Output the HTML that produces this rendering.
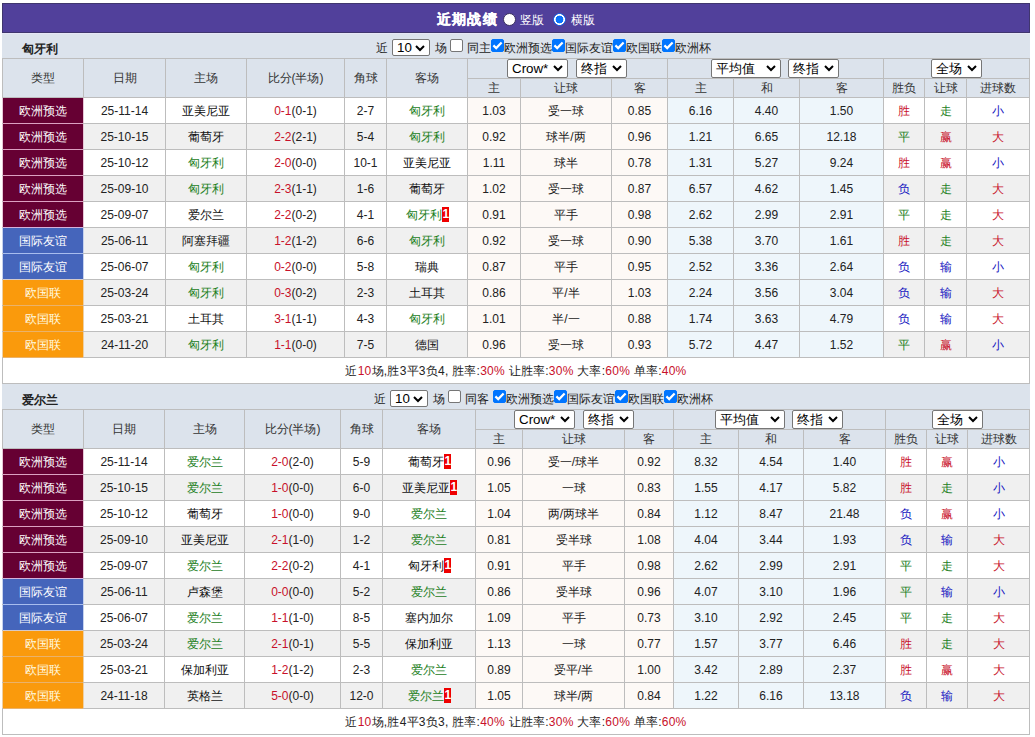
<!DOCTYPE html>
<html><head><meta charset="utf-8"><title>近期战绩</title>
<style>
html,body{margin:0;padding:0;background:#fff;}
body{width:1035px;height:737px;position:relative;overflow:hidden;font-family:"Liberation Sans", sans-serif;font-size:12px;color:#222;}
.a{position:absolute;text-align:center;white-space:nowrap;overflow:hidden;}
.t{position:absolute;white-space:nowrap;}
.sel{position:absolute;background:#fff;border:1px solid #767676;border-radius:2px;font-size:13.33px;color:#000;text-align:left;}
.sel .st{position:absolute;left:4px;top:0;}
.sel .chev{position:absolute;right:4px;top:5px;}
.cb{position:absolute;width:11px;height:11px;border:1px solid #767676;border-radius:2px;background:#fff;}
.cb.on{background:#0075ff;border-color:#0075ff;}
.cb svg{position:absolute;left:-1px;top:-1px;}
.radio{position:absolute;width:13px;height:13px;border-radius:50%;background:#fff;box-sizing:border-box;border:1px solid #3a3060;}
.radio.on{background:radial-gradient(circle,#0a74fb 0,#0a74fb 3.6px,#fff 4.2px,#fff 5.1px,#1f66e0 5.7px,#1f66e0 6.2px,rgba(31,102,224,0.3) 6.5px);border:none;}
.card{display:inline-block;background:#e00;color:#fff;font-weight:bold;width:7px;text-align:center;text-indent:1px;line-height:15px;height:15px;vertical-align:middle;margin-top:-3px}
</style></head><body>
<div class="a" style="left:2px;top:3px;width:1028px;height:30px;background:#51409b;box-sizing:border-box;border:1px solid #40366e"></div>
<div class="t" style="left:437px;top:10px;color:#fff;font-weight:bold;font-size:14px;letter-spacing:1.2px;line-height:18px;-webkit-text-stroke:0.35px #fff">近期战绩</div>
<div class="radio" style="left:503px;top:13px"></div>
<div class="t" style="left:520px;top:12px;color:#fff;line-height:17px">竖版</div>
<div class="radio on" style="left:553px;top:13px"></div>
<div class="t" style="left:571px;top:12px;color:#fff;line-height:17px">横版</div>
<div class="a" style="left:2px;top:33px;width:1028px;height:25px;background:#dce3ec;"></div>
<div class="t" style="left:22px;top:41px;font-weight:bold;color:#222;line-height:17px">匈牙利</div>
<div class="t" style="left:376px;top:40px;line-height:17px">近</div>
<div class="sel" style="left:392px;top:39px;width:36px;height:15px;line-height:15px"><span class="st">10</span><svg class="chev" width="10" height="7" viewBox="0 0 10 7"><path d="M1 1 L5 5 L9 1" fill="none" stroke="#000" stroke-width="2"/></svg></div>
<div class="t" style="left:435px;top:40px;line-height:17px">场</div>
<div class="cb" style="left:450px;top:39px"></div>
<div class="t" style="left:467px;top:40px;line-height:17px">同主</div>
<div class="cb on" style="left:491px;top:39px"><svg width="13" height="13" viewBox="0 0 13 13"><path d="M2.4 6.4 L5.2 9.1 L10.6 3.4" fill="none" stroke="#fff" stroke-width="2.2"/></svg></div>
<div class="t" style="left:504px;top:40px;line-height:17px">欧洲预选</div>
<div class="cb on" style="left:552px;top:39px"><svg width="13" height="13" viewBox="0 0 13 13"><path d="M2.4 6.4 L5.2 9.1 L10.6 3.4" fill="none" stroke="#fff" stroke-width="2.2"/></svg></div>
<div class="t" style="left:565px;top:40px;line-height:17px">国际友谊</div>
<div class="cb on" style="left:613px;top:39px"><svg width="13" height="13" viewBox="0 0 13 13"><path d="M2.4 6.4 L5.2 9.1 L10.6 3.4" fill="none" stroke="#fff" stroke-width="2.2"/></svg></div>
<div class="t" style="left:626px;top:40px;line-height:17px">欧国联</div>
<div class="cb on" style="left:662px;top:39px"><svg width="13" height="13" viewBox="0 0 13 13"><path d="M2.4 6.4 L5.2 9.1 L10.6 3.4" fill="none" stroke="#fff" stroke-width="2.2"/></svg></div>
<div class="t" style="left:675px;top:40px;line-height:17px">欧洲杯</div>
<div class="a" style="left:2px;top:58px;width:1028px;height:326px;background:#bdbdbd;"></div>
<div class="a" style="left:3px;top:59px;width:80px;height:38px;background:#dce3ec;line-height:38px;color:#333">类型</div>
<div class="a" style="left:84px;top:59px;width:81px;height:38px;background:#dce3ec;line-height:38px;color:#333">日期</div>
<div class="a" style="left:166px;top:59px;width:80px;height:38px;background:#dce3ec;line-height:38px;color:#333">主场</div>
<div class="a" style="left:247px;top:59px;width:97px;height:38px;background:#dce3ec;line-height:38px;color:#333">比分(半场)</div>
<div class="a" style="left:345px;top:59px;width:41px;height:38px;background:#dce3ec;line-height:38px;color:#333">角球</div>
<div class="a" style="left:387px;top:59px;width:80px;height:38px;background:#dce3ec;line-height:38px;color:#333">客场</div>
<div class="a" style="left:468px;top:59px;width:199px;height:19px;background:#dce3ec;line-height:19px;"></div>
<div class="a" style="left:668px;top:59px;width:215px;height:19px;background:#dce3ec;line-height:19px;"></div>
<div class="a" style="left:884px;top:59px;width:145px;height:19px;background:#dce3ec;line-height:19px;"></div>
<div class="a" style="left:468px;top:79px;width:52px;height:18px;background:#dce3ec;line-height:18px;color:#333">主</div>
<div class="a" style="left:521px;top:79px;width:90px;height:18px;background:#dce3ec;line-height:18px;color:#333">让球</div>
<div class="a" style="left:612px;top:79px;width:55px;height:18px;background:#dce3ec;line-height:18px;color:#333">客</div>
<div class="a" style="left:668px;top:79px;width:65px;height:18px;background:#dce3ec;line-height:18px;color:#333">主</div>
<div class="a" style="left:734px;top:79px;width:65px;height:18px;background:#dce3ec;line-height:18px;color:#333">和</div>
<div class="a" style="left:800px;top:79px;width:83px;height:18px;background:#dce3ec;line-height:18px;color:#333">客</div>
<div class="a" style="left:884px;top:79px;width:40px;height:18px;background:#dce3ec;line-height:18px;color:#333">胜负</div>
<div class="a" style="left:925px;top:79px;width:41px;height:18px;background:#dce3ec;line-height:18px;color:#333">让球</div>
<div class="a" style="left:967px;top:79px;width:62px;height:18px;background:#dce3ec;line-height:18px;color:#333">进球数</div>
<div class="sel" style="left:507px;top:59px;width:59px;height:17px;line-height:17px"><span class="st">Crow*</span><svg class="chev" width="10" height="7" viewBox="0 0 10 7"><path d="M1 1 L5 5 L9 1" fill="none" stroke="#000" stroke-width="2"/></svg></div>
<div class="sel" style="left:576px;top:59px;width:49px;height:17px;line-height:17px"><span class="st">终指</span><svg class="chev" width="10" height="7" viewBox="0 0 10 7"><path d="M1 1 L5 5 L9 1" fill="none" stroke="#000" stroke-width="2"/></svg></div>
<div class="sel" style="left:711px;top:59px;width:68px;height:17px;line-height:17px"><span class="st">平均值</span><svg class="chev" width="10" height="7" viewBox="0 0 10 7"><path d="M1 1 L5 5 L9 1" fill="none" stroke="#000" stroke-width="2"/></svg></div>
<div class="sel" style="left:788px;top:59px;width:49px;height:17px;line-height:17px"><span class="st">终指</span><svg class="chev" width="10" height="7" viewBox="0 0 10 7"><path d="M1 1 L5 5 L9 1" fill="none" stroke="#000" stroke-width="2"/></svg></div>
<div class="sel" style="left:931px;top:59px;width:49px;height:17px;line-height:17px"><span class="st">全场</span><svg class="chev" width="10" height="7" viewBox="0 0 10 7"><path d="M1 1 L5 5 L9 1" fill="none" stroke="#000" stroke-width="2"/></svg></div>
<div class="a" style="left:3px;top:98px;width:80px;height:26px;background:#660033;line-height:27px;color:#fff">欧洲预选</div>
<div class="a" style="left:84px;top:98px;width:81px;height:25px;background:#fff;line-height:27px;">25-11-14</div>
<div class="a" style="left:166px;top:98px;width:80px;height:25px;background:#fff;line-height:27px;color:#111">亚美尼亚</div>
<div class="a" style="left:247px;top:98px;width:97px;height:25px;background:#fff;line-height:27px;"><span style="color:#c8102a">0-1</span>(0-1)</div>
<div class="a" style="left:345px;top:98px;width:41px;height:25px;background:#fff;line-height:27px;">2-7</div>
<div class="a" style="left:387px;top:98px;width:80px;height:25px;background:#fff;line-height:27px;color:#1c801c">匈牙利</div>
<div class="a" style="left:468px;top:98px;width:52px;height:25px;background:#fdf9f6;line-height:27px;">1.03</div>
<div class="a" style="left:521px;top:98px;width:90px;height:25px;background:#fdf9f6;line-height:27px;">受一球</div>
<div class="a" style="left:612px;top:98px;width:55px;height:25px;background:#fdf9f6;line-height:27px;">0.85</div>
<div class="a" style="left:668px;top:98px;width:65px;height:25px;background:#eef6fb;line-height:27px;">6.16</div>
<div class="a" style="left:734px;top:98px;width:65px;height:25px;background:#eef6fb;line-height:27px;">4.40</div>
<div class="a" style="left:800px;top:98px;width:83px;height:25px;background:#eef6fb;line-height:27px;">1.50</div>
<div class="a" style="left:884px;top:98px;width:40px;height:25px;background:#fff;line-height:27px;color:#c8102a">胜</div>
<div class="a" style="left:925px;top:98px;width:41px;height:25px;background:#fff;line-height:27px;color:#1c801c">走</div>
<div class="a" style="left:967px;top:98px;width:62px;height:25px;background:#fff;line-height:27px;color:#1414c0">小</div>
<div class="a" style="left:3px;top:124px;width:80px;height:26px;background:#660033;line-height:27px;color:#fff">欧洲预选</div>
<div class="a" style="left:84px;top:124px;width:81px;height:25px;background:#f0f0f0;line-height:27px;">25-10-15</div>
<div class="a" style="left:166px;top:124px;width:80px;height:25px;background:#f0f0f0;line-height:27px;color:#111">葡萄牙</div>
<div class="a" style="left:247px;top:124px;width:97px;height:25px;background:#f0f0f0;line-height:27px;"><span style="color:#c8102a">2-2</span>(2-1)</div>
<div class="a" style="left:345px;top:124px;width:41px;height:25px;background:#f0f0f0;line-height:27px;">5-4</div>
<div class="a" style="left:387px;top:124px;width:80px;height:25px;background:#f0f0f0;line-height:27px;color:#1c801c">匈牙利</div>
<div class="a" style="left:468px;top:124px;width:52px;height:25px;background:#fdf9f6;line-height:27px;">0.92</div>
<div class="a" style="left:521px;top:124px;width:90px;height:25px;background:#fdf9f6;line-height:27px;">球半/两</div>
<div class="a" style="left:612px;top:124px;width:55px;height:25px;background:#fdf9f6;line-height:27px;">0.96</div>
<div class="a" style="left:668px;top:124px;width:65px;height:25px;background:#eef6fb;line-height:27px;">1.21</div>
<div class="a" style="left:734px;top:124px;width:65px;height:25px;background:#eef6fb;line-height:27px;">6.65</div>
<div class="a" style="left:800px;top:124px;width:83px;height:25px;background:#eef6fb;line-height:27px;">12.18</div>
<div class="a" style="left:884px;top:124px;width:40px;height:25px;background:#f0f0f0;line-height:27px;color:#1c801c">平</div>
<div class="a" style="left:925px;top:124px;width:41px;height:25px;background:#f0f0f0;line-height:27px;color:#c8102a">赢</div>
<div class="a" style="left:967px;top:124px;width:62px;height:25px;background:#f0f0f0;line-height:27px;color:#c8102a">大</div>
<div class="a" style="left:3px;top:150px;width:80px;height:26px;background:#660033;line-height:27px;color:#fff">欧洲预选</div>
<div class="a" style="left:84px;top:150px;width:81px;height:25px;background:#fff;line-height:27px;">25-10-12</div>
<div class="a" style="left:166px;top:150px;width:80px;height:25px;background:#fff;line-height:27px;color:#1c801c">匈牙利</div>
<div class="a" style="left:247px;top:150px;width:97px;height:25px;background:#fff;line-height:27px;"><span style="color:#c8102a">2-0</span>(0-0)</div>
<div class="a" style="left:345px;top:150px;width:41px;height:25px;background:#fff;line-height:27px;">10-1</div>
<div class="a" style="left:387px;top:150px;width:80px;height:25px;background:#fff;line-height:27px;color:#111">亚美尼亚</div>
<div class="a" style="left:468px;top:150px;width:52px;height:25px;background:#fdf9f6;line-height:27px;">1.11</div>
<div class="a" style="left:521px;top:150px;width:90px;height:25px;background:#fdf9f6;line-height:27px;">球半</div>
<div class="a" style="left:612px;top:150px;width:55px;height:25px;background:#fdf9f6;line-height:27px;">0.78</div>
<div class="a" style="left:668px;top:150px;width:65px;height:25px;background:#eef6fb;line-height:27px;">1.31</div>
<div class="a" style="left:734px;top:150px;width:65px;height:25px;background:#eef6fb;line-height:27px;">5.27</div>
<div class="a" style="left:800px;top:150px;width:83px;height:25px;background:#eef6fb;line-height:27px;">9.24</div>
<div class="a" style="left:884px;top:150px;width:40px;height:25px;background:#fff;line-height:27px;color:#c8102a">胜</div>
<div class="a" style="left:925px;top:150px;width:41px;height:25px;background:#fff;line-height:27px;color:#c8102a">赢</div>
<div class="a" style="left:967px;top:150px;width:62px;height:25px;background:#fff;line-height:27px;color:#1414c0">小</div>
<div class="a" style="left:3px;top:176px;width:80px;height:26px;background:#660033;line-height:27px;color:#fff">欧洲预选</div>
<div class="a" style="left:84px;top:176px;width:81px;height:25px;background:#f0f0f0;line-height:27px;">25-09-10</div>
<div class="a" style="left:166px;top:176px;width:80px;height:25px;background:#f0f0f0;line-height:27px;color:#1c801c">匈牙利</div>
<div class="a" style="left:247px;top:176px;width:97px;height:25px;background:#f0f0f0;line-height:27px;"><span style="color:#c8102a">2-3</span>(1-1)</div>
<div class="a" style="left:345px;top:176px;width:41px;height:25px;background:#f0f0f0;line-height:27px;">1-6</div>
<div class="a" style="left:387px;top:176px;width:80px;height:25px;background:#f0f0f0;line-height:27px;color:#111">葡萄牙</div>
<div class="a" style="left:468px;top:176px;width:52px;height:25px;background:#fdf9f6;line-height:27px;">1.02</div>
<div class="a" style="left:521px;top:176px;width:90px;height:25px;background:#fdf9f6;line-height:27px;">受一球</div>
<div class="a" style="left:612px;top:176px;width:55px;height:25px;background:#fdf9f6;line-height:27px;">0.87</div>
<div class="a" style="left:668px;top:176px;width:65px;height:25px;background:#eef6fb;line-height:27px;">6.57</div>
<div class="a" style="left:734px;top:176px;width:65px;height:25px;background:#eef6fb;line-height:27px;">4.62</div>
<div class="a" style="left:800px;top:176px;width:83px;height:25px;background:#eef6fb;line-height:27px;">1.45</div>
<div class="a" style="left:884px;top:176px;width:40px;height:25px;background:#f0f0f0;line-height:27px;color:#1414c0">负</div>
<div class="a" style="left:925px;top:176px;width:41px;height:25px;background:#f0f0f0;line-height:27px;color:#1c801c">走</div>
<div class="a" style="left:967px;top:176px;width:62px;height:25px;background:#f0f0f0;line-height:27px;color:#c8102a">大</div>
<div class="a" style="left:3px;top:202px;width:80px;height:26px;background:#660033;line-height:27px;color:#fff">欧洲预选</div>
<div class="a" style="left:84px;top:202px;width:81px;height:25px;background:#fff;line-height:27px;">25-09-07</div>
<div class="a" style="left:166px;top:202px;width:80px;height:25px;background:#fff;line-height:27px;color:#111">爱尔兰</div>
<div class="a" style="left:247px;top:202px;width:97px;height:25px;background:#fff;line-height:27px;"><span style="color:#c8102a">2-2</span>(0-2)</div>
<div class="a" style="left:345px;top:202px;width:41px;height:25px;background:#fff;line-height:27px;">4-1</div>
<div class="a" style="left:387px;top:202px;width:80px;height:25px;background:#fff;line-height:27px;color:#1c801c">匈牙利<span class="card">1</span></div>
<div class="a" style="left:468px;top:202px;width:52px;height:25px;background:#fdf9f6;line-height:27px;">0.91</div>
<div class="a" style="left:521px;top:202px;width:90px;height:25px;background:#fdf9f6;line-height:27px;">平手</div>
<div class="a" style="left:612px;top:202px;width:55px;height:25px;background:#fdf9f6;line-height:27px;">0.98</div>
<div class="a" style="left:668px;top:202px;width:65px;height:25px;background:#eef6fb;line-height:27px;">2.62</div>
<div class="a" style="left:734px;top:202px;width:65px;height:25px;background:#eef6fb;line-height:27px;">2.99</div>
<div class="a" style="left:800px;top:202px;width:83px;height:25px;background:#eef6fb;line-height:27px;">2.91</div>
<div class="a" style="left:884px;top:202px;width:40px;height:25px;background:#fff;line-height:27px;color:#1c801c">平</div>
<div class="a" style="left:925px;top:202px;width:41px;height:25px;background:#fff;line-height:27px;color:#1c801c">走</div>
<div class="a" style="left:967px;top:202px;width:62px;height:25px;background:#fff;line-height:27px;color:#c8102a">大</div>
<div class="a" style="left:3px;top:228px;width:80px;height:26px;background:#4565bb;line-height:27px;color:#fff">国际友谊</div>
<div class="a" style="left:84px;top:228px;width:81px;height:25px;background:#f0f0f0;line-height:27px;">25-06-11</div>
<div class="a" style="left:166px;top:228px;width:80px;height:25px;background:#f0f0f0;line-height:27px;color:#111">阿塞拜疆</div>
<div class="a" style="left:247px;top:228px;width:97px;height:25px;background:#f0f0f0;line-height:27px;"><span style="color:#c8102a">1-2</span>(1-2)</div>
<div class="a" style="left:345px;top:228px;width:41px;height:25px;background:#f0f0f0;line-height:27px;">6-6</div>
<div class="a" style="left:387px;top:228px;width:80px;height:25px;background:#f0f0f0;line-height:27px;color:#1c801c">匈牙利</div>
<div class="a" style="left:468px;top:228px;width:52px;height:25px;background:#fdf9f6;line-height:27px;">0.92</div>
<div class="a" style="left:521px;top:228px;width:90px;height:25px;background:#fdf9f6;line-height:27px;">受一球</div>
<div class="a" style="left:612px;top:228px;width:55px;height:25px;background:#fdf9f6;line-height:27px;">0.90</div>
<div class="a" style="left:668px;top:228px;width:65px;height:25px;background:#eef6fb;line-height:27px;">5.38</div>
<div class="a" style="left:734px;top:228px;width:65px;height:25px;background:#eef6fb;line-height:27px;">3.70</div>
<div class="a" style="left:800px;top:228px;width:83px;height:25px;background:#eef6fb;line-height:27px;">1.61</div>
<div class="a" style="left:884px;top:228px;width:40px;height:25px;background:#f0f0f0;line-height:27px;color:#c8102a">胜</div>
<div class="a" style="left:925px;top:228px;width:41px;height:25px;background:#f0f0f0;line-height:27px;color:#1c801c">走</div>
<div class="a" style="left:967px;top:228px;width:62px;height:25px;background:#f0f0f0;line-height:27px;color:#c8102a">大</div>
<div class="a" style="left:3px;top:254px;width:80px;height:26px;background:#4565bb;line-height:27px;color:#fff">国际友谊</div>
<div class="a" style="left:84px;top:254px;width:81px;height:25px;background:#fff;line-height:27px;">25-06-07</div>
<div class="a" style="left:166px;top:254px;width:80px;height:25px;background:#fff;line-height:27px;color:#1c801c">匈牙利</div>
<div class="a" style="left:247px;top:254px;width:97px;height:25px;background:#fff;line-height:27px;"><span style="color:#c8102a">0-2</span>(0-0)</div>
<div class="a" style="left:345px;top:254px;width:41px;height:25px;background:#fff;line-height:27px;">5-8</div>
<div class="a" style="left:387px;top:254px;width:80px;height:25px;background:#fff;line-height:27px;color:#111">瑞典</div>
<div class="a" style="left:468px;top:254px;width:52px;height:25px;background:#fdf9f6;line-height:27px;">0.87</div>
<div class="a" style="left:521px;top:254px;width:90px;height:25px;background:#fdf9f6;line-height:27px;">平手</div>
<div class="a" style="left:612px;top:254px;width:55px;height:25px;background:#fdf9f6;line-height:27px;">0.95</div>
<div class="a" style="left:668px;top:254px;width:65px;height:25px;background:#eef6fb;line-height:27px;">2.52</div>
<div class="a" style="left:734px;top:254px;width:65px;height:25px;background:#eef6fb;line-height:27px;">3.36</div>
<div class="a" style="left:800px;top:254px;width:83px;height:25px;background:#eef6fb;line-height:27px;">2.64</div>
<div class="a" style="left:884px;top:254px;width:40px;height:25px;background:#fff;line-height:27px;color:#1414c0">负</div>
<div class="a" style="left:925px;top:254px;width:41px;height:25px;background:#fff;line-height:27px;color:#1414c0">输</div>
<div class="a" style="left:967px;top:254px;width:62px;height:25px;background:#fff;line-height:27px;color:#1414c0">小</div>
<div class="a" style="left:3px;top:280px;width:80px;height:26px;background:#fa9a0c;line-height:27px;color:#fffbe2">欧国联</div>
<div class="a" style="left:84px;top:280px;width:81px;height:25px;background:#f0f0f0;line-height:27px;">25-03-24</div>
<div class="a" style="left:166px;top:280px;width:80px;height:25px;background:#f0f0f0;line-height:27px;color:#1c801c">匈牙利</div>
<div class="a" style="left:247px;top:280px;width:97px;height:25px;background:#f0f0f0;line-height:27px;"><span style="color:#c8102a">0-3</span>(0-2)</div>
<div class="a" style="left:345px;top:280px;width:41px;height:25px;background:#f0f0f0;line-height:27px;">2-3</div>
<div class="a" style="left:387px;top:280px;width:80px;height:25px;background:#f0f0f0;line-height:27px;color:#111">土耳其</div>
<div class="a" style="left:468px;top:280px;width:52px;height:25px;background:#fdf9f6;line-height:27px;">0.86</div>
<div class="a" style="left:521px;top:280px;width:90px;height:25px;background:#fdf9f6;line-height:27px;">平/半</div>
<div class="a" style="left:612px;top:280px;width:55px;height:25px;background:#fdf9f6;line-height:27px;">1.03</div>
<div class="a" style="left:668px;top:280px;width:65px;height:25px;background:#eef6fb;line-height:27px;">2.24</div>
<div class="a" style="left:734px;top:280px;width:65px;height:25px;background:#eef6fb;line-height:27px;">3.56</div>
<div class="a" style="left:800px;top:280px;width:83px;height:25px;background:#eef6fb;line-height:27px;">3.04</div>
<div class="a" style="left:884px;top:280px;width:40px;height:25px;background:#f0f0f0;line-height:27px;color:#1414c0">负</div>
<div class="a" style="left:925px;top:280px;width:41px;height:25px;background:#f0f0f0;line-height:27px;color:#1414c0">输</div>
<div class="a" style="left:967px;top:280px;width:62px;height:25px;background:#f0f0f0;line-height:27px;color:#c8102a">大</div>
<div class="a" style="left:3px;top:306px;width:80px;height:26px;background:#fa9a0c;line-height:27px;color:#fffbe2">欧国联</div>
<div class="a" style="left:84px;top:306px;width:81px;height:25px;background:#fff;line-height:27px;">25-03-21</div>
<div class="a" style="left:166px;top:306px;width:80px;height:25px;background:#fff;line-height:27px;color:#111">土耳其</div>
<div class="a" style="left:247px;top:306px;width:97px;height:25px;background:#fff;line-height:27px;"><span style="color:#c8102a">3-1</span>(1-1)</div>
<div class="a" style="left:345px;top:306px;width:41px;height:25px;background:#fff;line-height:27px;">4-3</div>
<div class="a" style="left:387px;top:306px;width:80px;height:25px;background:#fff;line-height:27px;color:#1c801c">匈牙利</div>
<div class="a" style="left:468px;top:306px;width:52px;height:25px;background:#fdf9f6;line-height:27px;">1.01</div>
<div class="a" style="left:521px;top:306px;width:90px;height:25px;background:#fdf9f6;line-height:27px;">半/一</div>
<div class="a" style="left:612px;top:306px;width:55px;height:25px;background:#fdf9f6;line-height:27px;">0.88</div>
<div class="a" style="left:668px;top:306px;width:65px;height:25px;background:#eef6fb;line-height:27px;">1.74</div>
<div class="a" style="left:734px;top:306px;width:65px;height:25px;background:#eef6fb;line-height:27px;">3.63</div>
<div class="a" style="left:800px;top:306px;width:83px;height:25px;background:#eef6fb;line-height:27px;">4.79</div>
<div class="a" style="left:884px;top:306px;width:40px;height:25px;background:#fff;line-height:27px;color:#1414c0">负</div>
<div class="a" style="left:925px;top:306px;width:41px;height:25px;background:#fff;line-height:27px;color:#1414c0">输</div>
<div class="a" style="left:967px;top:306px;width:62px;height:25px;background:#fff;line-height:27px;color:#c8102a">大</div>
<div class="a" style="left:3px;top:332px;width:80px;height:26px;background:#fa9a0c;line-height:27px;color:#fffbe2">欧国联</div>
<div class="a" style="left:84px;top:332px;width:81px;height:25px;background:#f0f0f0;line-height:27px;">24-11-20</div>
<div class="a" style="left:166px;top:332px;width:80px;height:25px;background:#f0f0f0;line-height:27px;color:#1c801c">匈牙利</div>
<div class="a" style="left:247px;top:332px;width:97px;height:25px;background:#f0f0f0;line-height:27px;"><span style="color:#c8102a">1-1</span>(0-0)</div>
<div class="a" style="left:345px;top:332px;width:41px;height:25px;background:#f0f0f0;line-height:27px;">7-5</div>
<div class="a" style="left:387px;top:332px;width:80px;height:25px;background:#f0f0f0;line-height:27px;color:#111">德国</div>
<div class="a" style="left:468px;top:332px;width:52px;height:25px;background:#fdf9f6;line-height:27px;">0.96</div>
<div class="a" style="left:521px;top:332px;width:90px;height:25px;background:#fdf9f6;line-height:27px;">受一球</div>
<div class="a" style="left:612px;top:332px;width:55px;height:25px;background:#fdf9f6;line-height:27px;">0.93</div>
<div class="a" style="left:668px;top:332px;width:65px;height:25px;background:#eef6fb;line-height:27px;">5.72</div>
<div class="a" style="left:734px;top:332px;width:65px;height:25px;background:#eef6fb;line-height:27px;">4.47</div>
<div class="a" style="left:800px;top:332px;width:83px;height:25px;background:#eef6fb;line-height:27px;">1.52</div>
<div class="a" style="left:884px;top:332px;width:40px;height:25px;background:#f0f0f0;line-height:27px;color:#1c801c">平</div>
<div class="a" style="left:925px;top:332px;width:41px;height:25px;background:#f0f0f0;line-height:27px;color:#c8102a">赢</div>
<div class="a" style="left:967px;top:332px;width:62px;height:25px;background:#f0f0f0;line-height:27px;color:#1414c0">小</div>
<div class="a" style="left:2px;top:98px;width:1px;height:25px;background:#e6c6d6;"></div>
<div class="a" style="left:83px;top:98px;width:1px;height:25px;background:#e6c6d6;"></div>
<div class="a" style="left:3px;top:123px;width:80px;height:1px;background:#dca0c2;"></div>
<div class="a" style="left:2px;top:124px;width:1px;height:25px;background:#e6c6d6;"></div>
<div class="a" style="left:83px;top:124px;width:1px;height:25px;background:#e6c6d6;"></div>
<div class="a" style="left:3px;top:149px;width:80px;height:1px;background:#dca0c2;"></div>
<div class="a" style="left:2px;top:150px;width:1px;height:25px;background:#e6c6d6;"></div>
<div class="a" style="left:83px;top:150px;width:1px;height:25px;background:#e6c6d6;"></div>
<div class="a" style="left:3px;top:175px;width:80px;height:1px;background:#dca0c2;"></div>
<div class="a" style="left:2px;top:176px;width:1px;height:25px;background:#e6c6d6;"></div>
<div class="a" style="left:83px;top:176px;width:1px;height:25px;background:#e6c6d6;"></div>
<div class="a" style="left:3px;top:201px;width:80px;height:1px;background:#dca0c2;"></div>
<div class="a" style="left:2px;top:202px;width:1px;height:25px;background:#e6c6d6;"></div>
<div class="a" style="left:83px;top:202px;width:1px;height:25px;background:#e6c6d6;"></div>
<div class="a" style="left:3px;top:227px;width:80px;height:1px;background:#d4b2dc;"></div>
<div class="a" style="left:2px;top:228px;width:1px;height:25px;background:#c6d2ee;"></div>
<div class="a" style="left:83px;top:228px;width:1px;height:25px;background:#c6d2ee;"></div>
<div class="a" style="left:3px;top:253px;width:80px;height:1px;background:#a8bdee;"></div>
<div class="a" style="left:2px;top:254px;width:1px;height:25px;background:#c6d2ee;"></div>
<div class="a" style="left:83px;top:254px;width:1px;height:25px;background:#c6d2ee;"></div>
<div class="a" style="left:3px;top:279px;width:80px;height:1px;background:#d6cac8;"></div>
<div class="a" style="left:2px;top:280px;width:1px;height:25px;background:#eecfa2;"></div>
<div class="a" style="left:83px;top:280px;width:1px;height:25px;background:#eecfa2;"></div>
<div class="a" style="left:3px;top:305px;width:80px;height:1px;background:#eab26a;"></div>
<div class="a" style="left:2px;top:306px;width:1px;height:25px;background:#eecfa2;"></div>
<div class="a" style="left:83px;top:306px;width:1px;height:25px;background:#eecfa2;"></div>
<div class="a" style="left:3px;top:331px;width:80px;height:1px;background:#eab26a;"></div>
<div class="a" style="left:2px;top:332px;width:1px;height:25px;background:#eecfa2;"></div>
<div class="a" style="left:83px;top:332px;width:1px;height:25px;background:#eecfa2;"></div>
<div class="a" style="left:3px;top:357px;width:80px;height:1px;background:#eab26a;"></div>
<div class="a" style="left:3px;top:358px;width:1026px;height:25px;background:#fff;line-height:27px;letter-spacing:0.25px">近<span style="color:#c8102a">10</span>场,胜3平3负4, 胜率:<span style="color:#c8102a">30%</span> 让胜率:<span style="color:#c8102a">30%</span> 大率:<span style="color:#c8102a">60%</span> 单率:<span style="color:#c8102a">40%</span></div>
<div class="a" style="left:2px;top:384px;width:1028px;height:25px;background:#dce3ec;"></div>
<div class="t" style="left:22px;top:392px;font-weight:bold;color:#222;line-height:17px">爱尔兰</div>
<div class="t" style="left:374px;top:391px;line-height:17px">近</div>
<div class="sel" style="left:390px;top:390px;width:36px;height:15px;line-height:15px"><span class="st">10</span><svg class="chev" width="10" height="7" viewBox="0 0 10 7"><path d="M1 1 L5 5 L9 1" fill="none" stroke="#000" stroke-width="2"/></svg></div>
<div class="t" style="left:433px;top:391px;line-height:17px">场</div>
<div class="cb" style="left:448px;top:390px"></div>
<div class="t" style="left:465px;top:391px;line-height:17px">同客</div>
<div class="cb on" style="left:493px;top:390px"><svg width="13" height="13" viewBox="0 0 13 13"><path d="M2.4 6.4 L5.2 9.1 L10.6 3.4" fill="none" stroke="#fff" stroke-width="2.2"/></svg></div>
<div class="t" style="left:506px;top:391px;line-height:17px">欧洲预选</div>
<div class="cb on" style="left:554px;top:390px"><svg width="13" height="13" viewBox="0 0 13 13"><path d="M2.4 6.4 L5.2 9.1 L10.6 3.4" fill="none" stroke="#fff" stroke-width="2.2"/></svg></div>
<div class="t" style="left:567px;top:391px;line-height:17px">国际友谊</div>
<div class="cb on" style="left:615px;top:390px"><svg width="13" height="13" viewBox="0 0 13 13"><path d="M2.4 6.4 L5.2 9.1 L10.6 3.4" fill="none" stroke="#fff" stroke-width="2.2"/></svg></div>
<div class="t" style="left:628px;top:391px;line-height:17px">欧国联</div>
<div class="cb on" style="left:664px;top:390px"><svg width="13" height="13" viewBox="0 0 13 13"><path d="M2.4 6.4 L5.2 9.1 L10.6 3.4" fill="none" stroke="#fff" stroke-width="2.2"/></svg></div>
<div class="t" style="left:677px;top:391px;line-height:17px">欧洲杯</div>
<div class="a" style="left:2px;top:409px;width:1028px;height:326px;background:#bdbdbd;"></div>
<div class="a" style="left:3px;top:410px;width:80px;height:38px;background:#dce3ec;line-height:38px;color:#333">类型</div>
<div class="a" style="left:84px;top:410px;width:80px;height:38px;background:#dce3ec;line-height:38px;color:#333">日期</div>
<div class="a" style="left:165px;top:410px;width:79px;height:38px;background:#dce3ec;line-height:38px;color:#333">主场</div>
<div class="a" style="left:245px;top:410px;width:95px;height:38px;background:#dce3ec;line-height:38px;color:#333">比分(半场)</div>
<div class="a" style="left:341px;top:410px;width:41px;height:38px;background:#dce3ec;line-height:38px;color:#333">角球</div>
<div class="a" style="left:383px;top:410px;width:92px;height:38px;background:#dce3ec;line-height:38px;color:#333">客场</div>
<div class="a" style="left:476px;top:410px;width:197px;height:19px;background:#dce3ec;line-height:19px;"></div>
<div class="a" style="left:674px;top:410px;width:211px;height:19px;background:#dce3ec;line-height:19px;"></div>
<div class="a" style="left:886px;top:410px;width:143px;height:19px;background:#dce3ec;line-height:19px;"></div>
<div class="a" style="left:476px;top:430px;width:46px;height:18px;background:#dce3ec;line-height:18px;color:#333">主</div>
<div class="a" style="left:523px;top:430px;width:101px;height:18px;background:#dce3ec;line-height:18px;color:#333">让球</div>
<div class="a" style="left:625px;top:430px;width:48px;height:18px;background:#dce3ec;line-height:18px;color:#333">客</div>
<div class="a" style="left:674px;top:430px;width:64px;height:18px;background:#dce3ec;line-height:18px;color:#333">主</div>
<div class="a" style="left:739px;top:430px;width:64px;height:18px;background:#dce3ec;line-height:18px;color:#333">和</div>
<div class="a" style="left:804px;top:430px;width:81px;height:18px;background:#dce3ec;line-height:18px;color:#333">客</div>
<div class="a" style="left:886px;top:430px;width:40px;height:18px;background:#dce3ec;line-height:18px;color:#333">胜负</div>
<div class="a" style="left:927px;top:430px;width:40px;height:18px;background:#dce3ec;line-height:18px;color:#333">让球</div>
<div class="a" style="left:968px;top:430px;width:61px;height:18px;background:#dce3ec;line-height:18px;color:#333">进球数</div>
<div class="sel" style="left:514px;top:410px;width:59px;height:17px;line-height:17px"><span class="st">Crow*</span><svg class="chev" width="10" height="7" viewBox="0 0 10 7"><path d="M1 1 L5 5 L9 1" fill="none" stroke="#000" stroke-width="2"/></svg></div>
<div class="sel" style="left:583px;top:410px;width:49px;height:17px;line-height:17px"><span class="st">终指</span><svg class="chev" width="10" height="7" viewBox="0 0 10 7"><path d="M1 1 L5 5 L9 1" fill="none" stroke="#000" stroke-width="2"/></svg></div>
<div class="sel" style="left:715px;top:410px;width:68px;height:17px;line-height:17px"><span class="st">平均值</span><svg class="chev" width="10" height="7" viewBox="0 0 10 7"><path d="M1 1 L5 5 L9 1" fill="none" stroke="#000" stroke-width="2"/></svg></div>
<div class="sel" style="left:792px;top:410px;width:49px;height:17px;line-height:17px"><span class="st">终指</span><svg class="chev" width="10" height="7" viewBox="0 0 10 7"><path d="M1 1 L5 5 L9 1" fill="none" stroke="#000" stroke-width="2"/></svg></div>
<div class="sel" style="left:932px;top:410px;width:49px;height:17px;line-height:17px"><span class="st">全场</span><svg class="chev" width="10" height="7" viewBox="0 0 10 7"><path d="M1 1 L5 5 L9 1" fill="none" stroke="#000" stroke-width="2"/></svg></div>
<div class="a" style="left:3px;top:449px;width:80px;height:26px;background:#660033;line-height:27px;color:#fff">欧洲预选</div>
<div class="a" style="left:84px;top:449px;width:80px;height:25px;background:#fff;line-height:27px;">25-11-14</div>
<div class="a" style="left:165px;top:449px;width:79px;height:25px;background:#fff;line-height:27px;color:#1c801c">爱尔兰</div>
<div class="a" style="left:245px;top:449px;width:95px;height:25px;background:#fff;line-height:27px;"><span style="color:#c8102a">2-0</span>(2-0)</div>
<div class="a" style="left:341px;top:449px;width:41px;height:25px;background:#fff;line-height:27px;">5-9</div>
<div class="a" style="left:383px;top:449px;width:92px;height:25px;background:#fff;line-height:27px;color:#111">葡萄牙<span class="card">1</span></div>
<div class="a" style="left:476px;top:449px;width:46px;height:25px;background:#fdf9f6;line-height:27px;">0.96</div>
<div class="a" style="left:523px;top:449px;width:101px;height:25px;background:#fdf9f6;line-height:27px;">受一/球半</div>
<div class="a" style="left:625px;top:449px;width:48px;height:25px;background:#fdf9f6;line-height:27px;">0.92</div>
<div class="a" style="left:674px;top:449px;width:64px;height:25px;background:#eef6fb;line-height:27px;">8.32</div>
<div class="a" style="left:739px;top:449px;width:64px;height:25px;background:#eef6fb;line-height:27px;">4.54</div>
<div class="a" style="left:804px;top:449px;width:81px;height:25px;background:#eef6fb;line-height:27px;">1.40</div>
<div class="a" style="left:886px;top:449px;width:40px;height:25px;background:#fff;line-height:27px;color:#c8102a">胜</div>
<div class="a" style="left:927px;top:449px;width:40px;height:25px;background:#fff;line-height:27px;color:#c8102a">赢</div>
<div class="a" style="left:968px;top:449px;width:61px;height:25px;background:#fff;line-height:27px;color:#1414c0">小</div>
<div class="a" style="left:3px;top:475px;width:80px;height:26px;background:#660033;line-height:27px;color:#fff">欧洲预选</div>
<div class="a" style="left:84px;top:475px;width:80px;height:25px;background:#f0f0f0;line-height:27px;">25-10-15</div>
<div class="a" style="left:165px;top:475px;width:79px;height:25px;background:#f0f0f0;line-height:27px;color:#1c801c">爱尔兰</div>
<div class="a" style="left:245px;top:475px;width:95px;height:25px;background:#f0f0f0;line-height:27px;"><span style="color:#c8102a">1-0</span>(0-0)</div>
<div class="a" style="left:341px;top:475px;width:41px;height:25px;background:#f0f0f0;line-height:27px;">6-0</div>
<div class="a" style="left:383px;top:475px;width:92px;height:25px;background:#f0f0f0;line-height:27px;color:#111">亚美尼亚<span class="card">1</span></div>
<div class="a" style="left:476px;top:475px;width:46px;height:25px;background:#fdf9f6;line-height:27px;">1.05</div>
<div class="a" style="left:523px;top:475px;width:101px;height:25px;background:#fdf9f6;line-height:27px;">一球</div>
<div class="a" style="left:625px;top:475px;width:48px;height:25px;background:#fdf9f6;line-height:27px;">0.83</div>
<div class="a" style="left:674px;top:475px;width:64px;height:25px;background:#eef6fb;line-height:27px;">1.55</div>
<div class="a" style="left:739px;top:475px;width:64px;height:25px;background:#eef6fb;line-height:27px;">4.17</div>
<div class="a" style="left:804px;top:475px;width:81px;height:25px;background:#eef6fb;line-height:27px;">5.82</div>
<div class="a" style="left:886px;top:475px;width:40px;height:25px;background:#f0f0f0;line-height:27px;color:#c8102a">胜</div>
<div class="a" style="left:927px;top:475px;width:40px;height:25px;background:#f0f0f0;line-height:27px;color:#1c801c">走</div>
<div class="a" style="left:968px;top:475px;width:61px;height:25px;background:#f0f0f0;line-height:27px;color:#1414c0">小</div>
<div class="a" style="left:3px;top:501px;width:80px;height:26px;background:#660033;line-height:27px;color:#fff">欧洲预选</div>
<div class="a" style="left:84px;top:501px;width:80px;height:25px;background:#fff;line-height:27px;">25-10-12</div>
<div class="a" style="left:165px;top:501px;width:79px;height:25px;background:#fff;line-height:27px;color:#111">葡萄牙</div>
<div class="a" style="left:245px;top:501px;width:95px;height:25px;background:#fff;line-height:27px;"><span style="color:#c8102a">1-0</span>(0-0)</div>
<div class="a" style="left:341px;top:501px;width:41px;height:25px;background:#fff;line-height:27px;">9-0</div>
<div class="a" style="left:383px;top:501px;width:92px;height:25px;background:#fff;line-height:27px;color:#1c801c">爱尔兰</div>
<div class="a" style="left:476px;top:501px;width:46px;height:25px;background:#fdf9f6;line-height:27px;">1.04</div>
<div class="a" style="left:523px;top:501px;width:101px;height:25px;background:#fdf9f6;line-height:27px;">两/两球半</div>
<div class="a" style="left:625px;top:501px;width:48px;height:25px;background:#fdf9f6;line-height:27px;">0.84</div>
<div class="a" style="left:674px;top:501px;width:64px;height:25px;background:#eef6fb;line-height:27px;">1.12</div>
<div class="a" style="left:739px;top:501px;width:64px;height:25px;background:#eef6fb;line-height:27px;">8.47</div>
<div class="a" style="left:804px;top:501px;width:81px;height:25px;background:#eef6fb;line-height:27px;">21.48</div>
<div class="a" style="left:886px;top:501px;width:40px;height:25px;background:#fff;line-height:27px;color:#1414c0">负</div>
<div class="a" style="left:927px;top:501px;width:40px;height:25px;background:#fff;line-height:27px;color:#c8102a">赢</div>
<div class="a" style="left:968px;top:501px;width:61px;height:25px;background:#fff;line-height:27px;color:#1414c0">小</div>
<div class="a" style="left:3px;top:527px;width:80px;height:26px;background:#660033;line-height:27px;color:#fff">欧洲预选</div>
<div class="a" style="left:84px;top:527px;width:80px;height:25px;background:#f0f0f0;line-height:27px;">25-09-10</div>
<div class="a" style="left:165px;top:527px;width:79px;height:25px;background:#f0f0f0;line-height:27px;color:#111">亚美尼亚</div>
<div class="a" style="left:245px;top:527px;width:95px;height:25px;background:#f0f0f0;line-height:27px;"><span style="color:#c8102a">2-1</span>(1-0)</div>
<div class="a" style="left:341px;top:527px;width:41px;height:25px;background:#f0f0f0;line-height:27px;">1-2</div>
<div class="a" style="left:383px;top:527px;width:92px;height:25px;background:#f0f0f0;line-height:27px;color:#1c801c">爱尔兰</div>
<div class="a" style="left:476px;top:527px;width:46px;height:25px;background:#fdf9f6;line-height:27px;">0.81</div>
<div class="a" style="left:523px;top:527px;width:101px;height:25px;background:#fdf9f6;line-height:27px;">受半球</div>
<div class="a" style="left:625px;top:527px;width:48px;height:25px;background:#fdf9f6;line-height:27px;">1.08</div>
<div class="a" style="left:674px;top:527px;width:64px;height:25px;background:#eef6fb;line-height:27px;">4.04</div>
<div class="a" style="left:739px;top:527px;width:64px;height:25px;background:#eef6fb;line-height:27px;">3.44</div>
<div class="a" style="left:804px;top:527px;width:81px;height:25px;background:#eef6fb;line-height:27px;">1.93</div>
<div class="a" style="left:886px;top:527px;width:40px;height:25px;background:#f0f0f0;line-height:27px;color:#1414c0">负</div>
<div class="a" style="left:927px;top:527px;width:40px;height:25px;background:#f0f0f0;line-height:27px;color:#1414c0">输</div>
<div class="a" style="left:968px;top:527px;width:61px;height:25px;background:#f0f0f0;line-height:27px;color:#c8102a">大</div>
<div class="a" style="left:3px;top:553px;width:80px;height:26px;background:#660033;line-height:27px;color:#fff">欧洲预选</div>
<div class="a" style="left:84px;top:553px;width:80px;height:25px;background:#fff;line-height:27px;">25-09-07</div>
<div class="a" style="left:165px;top:553px;width:79px;height:25px;background:#fff;line-height:27px;color:#1c801c">爱尔兰</div>
<div class="a" style="left:245px;top:553px;width:95px;height:25px;background:#fff;line-height:27px;"><span style="color:#c8102a">2-2</span>(0-2)</div>
<div class="a" style="left:341px;top:553px;width:41px;height:25px;background:#fff;line-height:27px;">4-1</div>
<div class="a" style="left:383px;top:553px;width:92px;height:25px;background:#fff;line-height:27px;color:#111">匈牙利<span class="card">1</span></div>
<div class="a" style="left:476px;top:553px;width:46px;height:25px;background:#fdf9f6;line-height:27px;">0.91</div>
<div class="a" style="left:523px;top:553px;width:101px;height:25px;background:#fdf9f6;line-height:27px;">平手</div>
<div class="a" style="left:625px;top:553px;width:48px;height:25px;background:#fdf9f6;line-height:27px;">0.98</div>
<div class="a" style="left:674px;top:553px;width:64px;height:25px;background:#eef6fb;line-height:27px;">2.62</div>
<div class="a" style="left:739px;top:553px;width:64px;height:25px;background:#eef6fb;line-height:27px;">2.99</div>
<div class="a" style="left:804px;top:553px;width:81px;height:25px;background:#eef6fb;line-height:27px;">2.91</div>
<div class="a" style="left:886px;top:553px;width:40px;height:25px;background:#fff;line-height:27px;color:#1c801c">平</div>
<div class="a" style="left:927px;top:553px;width:40px;height:25px;background:#fff;line-height:27px;color:#1c801c">走</div>
<div class="a" style="left:968px;top:553px;width:61px;height:25px;background:#fff;line-height:27px;color:#c8102a">大</div>
<div class="a" style="left:3px;top:579px;width:80px;height:26px;background:#4565bb;line-height:27px;color:#fff">国际友谊</div>
<div class="a" style="left:84px;top:579px;width:80px;height:25px;background:#f0f0f0;line-height:27px;">25-06-11</div>
<div class="a" style="left:165px;top:579px;width:79px;height:25px;background:#f0f0f0;line-height:27px;color:#111">卢森堡</div>
<div class="a" style="left:245px;top:579px;width:95px;height:25px;background:#f0f0f0;line-height:27px;"><span style="color:#c8102a">0-0</span>(0-0)</div>
<div class="a" style="left:341px;top:579px;width:41px;height:25px;background:#f0f0f0;line-height:27px;">5-2</div>
<div class="a" style="left:383px;top:579px;width:92px;height:25px;background:#f0f0f0;line-height:27px;color:#1c801c">爱尔兰</div>
<div class="a" style="left:476px;top:579px;width:46px;height:25px;background:#fdf9f6;line-height:27px;">0.86</div>
<div class="a" style="left:523px;top:579px;width:101px;height:25px;background:#fdf9f6;line-height:27px;">受半球</div>
<div class="a" style="left:625px;top:579px;width:48px;height:25px;background:#fdf9f6;line-height:27px;">0.96</div>
<div class="a" style="left:674px;top:579px;width:64px;height:25px;background:#eef6fb;line-height:27px;">4.07</div>
<div class="a" style="left:739px;top:579px;width:64px;height:25px;background:#eef6fb;line-height:27px;">3.10</div>
<div class="a" style="left:804px;top:579px;width:81px;height:25px;background:#eef6fb;line-height:27px;">1.96</div>
<div class="a" style="left:886px;top:579px;width:40px;height:25px;background:#f0f0f0;line-height:27px;color:#1c801c">平</div>
<div class="a" style="left:927px;top:579px;width:40px;height:25px;background:#f0f0f0;line-height:27px;color:#1414c0">输</div>
<div class="a" style="left:968px;top:579px;width:61px;height:25px;background:#f0f0f0;line-height:27px;color:#1414c0">小</div>
<div class="a" style="left:3px;top:605px;width:80px;height:26px;background:#4565bb;line-height:27px;color:#fff">国际友谊</div>
<div class="a" style="left:84px;top:605px;width:80px;height:25px;background:#fff;line-height:27px;">25-06-07</div>
<div class="a" style="left:165px;top:605px;width:79px;height:25px;background:#fff;line-height:27px;color:#1c801c">爱尔兰</div>
<div class="a" style="left:245px;top:605px;width:95px;height:25px;background:#fff;line-height:27px;"><span style="color:#c8102a">1-1</span>(1-0)</div>
<div class="a" style="left:341px;top:605px;width:41px;height:25px;background:#fff;line-height:27px;">8-5</div>
<div class="a" style="left:383px;top:605px;width:92px;height:25px;background:#fff;line-height:27px;color:#111">塞内加尔</div>
<div class="a" style="left:476px;top:605px;width:46px;height:25px;background:#fdf9f6;line-height:27px;">1.09</div>
<div class="a" style="left:523px;top:605px;width:101px;height:25px;background:#fdf9f6;line-height:27px;">平手</div>
<div class="a" style="left:625px;top:605px;width:48px;height:25px;background:#fdf9f6;line-height:27px;">0.73</div>
<div class="a" style="left:674px;top:605px;width:64px;height:25px;background:#eef6fb;line-height:27px;">3.10</div>
<div class="a" style="left:739px;top:605px;width:64px;height:25px;background:#eef6fb;line-height:27px;">2.92</div>
<div class="a" style="left:804px;top:605px;width:81px;height:25px;background:#eef6fb;line-height:27px;">2.45</div>
<div class="a" style="left:886px;top:605px;width:40px;height:25px;background:#fff;line-height:27px;color:#1c801c">平</div>
<div class="a" style="left:927px;top:605px;width:40px;height:25px;background:#fff;line-height:27px;color:#1c801c">走</div>
<div class="a" style="left:968px;top:605px;width:61px;height:25px;background:#fff;line-height:27px;color:#c8102a">大</div>
<div class="a" style="left:3px;top:631px;width:80px;height:26px;background:#fa9a0c;line-height:27px;color:#fffbe2">欧国联</div>
<div class="a" style="left:84px;top:631px;width:80px;height:25px;background:#f0f0f0;line-height:27px;">25-03-24</div>
<div class="a" style="left:165px;top:631px;width:79px;height:25px;background:#f0f0f0;line-height:27px;color:#1c801c">爱尔兰</div>
<div class="a" style="left:245px;top:631px;width:95px;height:25px;background:#f0f0f0;line-height:27px;"><span style="color:#c8102a">2-1</span>(0-1)</div>
<div class="a" style="left:341px;top:631px;width:41px;height:25px;background:#f0f0f0;line-height:27px;">5-5</div>
<div class="a" style="left:383px;top:631px;width:92px;height:25px;background:#f0f0f0;line-height:27px;color:#111">保加利亚</div>
<div class="a" style="left:476px;top:631px;width:46px;height:25px;background:#fdf9f6;line-height:27px;">1.13</div>
<div class="a" style="left:523px;top:631px;width:101px;height:25px;background:#fdf9f6;line-height:27px;">一球</div>
<div class="a" style="left:625px;top:631px;width:48px;height:25px;background:#fdf9f6;line-height:27px;">0.77</div>
<div class="a" style="left:674px;top:631px;width:64px;height:25px;background:#eef6fb;line-height:27px;">1.57</div>
<div class="a" style="left:739px;top:631px;width:64px;height:25px;background:#eef6fb;line-height:27px;">3.77</div>
<div class="a" style="left:804px;top:631px;width:81px;height:25px;background:#eef6fb;line-height:27px;">6.46</div>
<div class="a" style="left:886px;top:631px;width:40px;height:25px;background:#f0f0f0;line-height:27px;color:#c8102a">胜</div>
<div class="a" style="left:927px;top:631px;width:40px;height:25px;background:#f0f0f0;line-height:27px;color:#1c801c">走</div>
<div class="a" style="left:968px;top:631px;width:61px;height:25px;background:#f0f0f0;line-height:27px;color:#c8102a">大</div>
<div class="a" style="left:3px;top:657px;width:80px;height:26px;background:#fa9a0c;line-height:27px;color:#fffbe2">欧国联</div>
<div class="a" style="left:84px;top:657px;width:80px;height:25px;background:#fff;line-height:27px;">25-03-21</div>
<div class="a" style="left:165px;top:657px;width:79px;height:25px;background:#fff;line-height:27px;color:#111">保加利亚</div>
<div class="a" style="left:245px;top:657px;width:95px;height:25px;background:#fff;line-height:27px;"><span style="color:#c8102a">1-2</span>(1-2)</div>
<div class="a" style="left:341px;top:657px;width:41px;height:25px;background:#fff;line-height:27px;">2-3</div>
<div class="a" style="left:383px;top:657px;width:92px;height:25px;background:#fff;line-height:27px;color:#1c801c">爱尔兰</div>
<div class="a" style="left:476px;top:657px;width:46px;height:25px;background:#fdf9f6;line-height:27px;">0.89</div>
<div class="a" style="left:523px;top:657px;width:101px;height:25px;background:#fdf9f6;line-height:27px;">受平/半</div>
<div class="a" style="left:625px;top:657px;width:48px;height:25px;background:#fdf9f6;line-height:27px;">1.00</div>
<div class="a" style="left:674px;top:657px;width:64px;height:25px;background:#eef6fb;line-height:27px;">3.42</div>
<div class="a" style="left:739px;top:657px;width:64px;height:25px;background:#eef6fb;line-height:27px;">2.89</div>
<div class="a" style="left:804px;top:657px;width:81px;height:25px;background:#eef6fb;line-height:27px;">2.37</div>
<div class="a" style="left:886px;top:657px;width:40px;height:25px;background:#fff;line-height:27px;color:#c8102a">胜</div>
<div class="a" style="left:927px;top:657px;width:40px;height:25px;background:#fff;line-height:27px;color:#c8102a">赢</div>
<div class="a" style="left:968px;top:657px;width:61px;height:25px;background:#fff;line-height:27px;color:#c8102a">大</div>
<div class="a" style="left:3px;top:683px;width:80px;height:26px;background:#fa9a0c;line-height:27px;color:#fffbe2">欧国联</div>
<div class="a" style="left:84px;top:683px;width:80px;height:25px;background:#f0f0f0;line-height:27px;">24-11-18</div>
<div class="a" style="left:165px;top:683px;width:79px;height:25px;background:#f0f0f0;line-height:27px;color:#111">英格兰</div>
<div class="a" style="left:245px;top:683px;width:95px;height:25px;background:#f0f0f0;line-height:27px;"><span style="color:#c8102a">5-0</span>(0-0)</div>
<div class="a" style="left:341px;top:683px;width:41px;height:25px;background:#f0f0f0;line-height:27px;">12-0</div>
<div class="a" style="left:383px;top:683px;width:92px;height:25px;background:#f0f0f0;line-height:27px;color:#1c801c">爱尔兰<span class="card">1</span></div>
<div class="a" style="left:476px;top:683px;width:46px;height:25px;background:#fdf9f6;line-height:27px;">1.05</div>
<div class="a" style="left:523px;top:683px;width:101px;height:25px;background:#fdf9f6;line-height:27px;">球半/两</div>
<div class="a" style="left:625px;top:683px;width:48px;height:25px;background:#fdf9f6;line-height:27px;">0.84</div>
<div class="a" style="left:674px;top:683px;width:64px;height:25px;background:#eef6fb;line-height:27px;">1.22</div>
<div class="a" style="left:739px;top:683px;width:64px;height:25px;background:#eef6fb;line-height:27px;">6.16</div>
<div class="a" style="left:804px;top:683px;width:81px;height:25px;background:#eef6fb;line-height:27px;">13.18</div>
<div class="a" style="left:886px;top:683px;width:40px;height:25px;background:#f0f0f0;line-height:27px;color:#1414c0">负</div>
<div class="a" style="left:927px;top:683px;width:40px;height:25px;background:#f0f0f0;line-height:27px;color:#1414c0">输</div>
<div class="a" style="left:968px;top:683px;width:61px;height:25px;background:#f0f0f0;line-height:27px;color:#c8102a">大</div>
<div class="a" style="left:2px;top:449px;width:1px;height:25px;background:#e6c6d6;"></div>
<div class="a" style="left:83px;top:449px;width:1px;height:25px;background:#e6c6d6;"></div>
<div class="a" style="left:3px;top:474px;width:80px;height:1px;background:#dca0c2;"></div>
<div class="a" style="left:2px;top:475px;width:1px;height:25px;background:#e6c6d6;"></div>
<div class="a" style="left:83px;top:475px;width:1px;height:25px;background:#e6c6d6;"></div>
<div class="a" style="left:3px;top:500px;width:80px;height:1px;background:#dca0c2;"></div>
<div class="a" style="left:2px;top:501px;width:1px;height:25px;background:#e6c6d6;"></div>
<div class="a" style="left:83px;top:501px;width:1px;height:25px;background:#e6c6d6;"></div>
<div class="a" style="left:3px;top:526px;width:80px;height:1px;background:#dca0c2;"></div>
<div class="a" style="left:2px;top:527px;width:1px;height:25px;background:#e6c6d6;"></div>
<div class="a" style="left:83px;top:527px;width:1px;height:25px;background:#e6c6d6;"></div>
<div class="a" style="left:3px;top:552px;width:80px;height:1px;background:#dca0c2;"></div>
<div class="a" style="left:2px;top:553px;width:1px;height:25px;background:#e6c6d6;"></div>
<div class="a" style="left:83px;top:553px;width:1px;height:25px;background:#e6c6d6;"></div>
<div class="a" style="left:3px;top:578px;width:80px;height:1px;background:#d4b2dc;"></div>
<div class="a" style="left:2px;top:579px;width:1px;height:25px;background:#c6d2ee;"></div>
<div class="a" style="left:83px;top:579px;width:1px;height:25px;background:#c6d2ee;"></div>
<div class="a" style="left:3px;top:604px;width:80px;height:1px;background:#a8bdee;"></div>
<div class="a" style="left:2px;top:605px;width:1px;height:25px;background:#c6d2ee;"></div>
<div class="a" style="left:83px;top:605px;width:1px;height:25px;background:#c6d2ee;"></div>
<div class="a" style="left:3px;top:630px;width:80px;height:1px;background:#d6cac8;"></div>
<div class="a" style="left:2px;top:631px;width:1px;height:25px;background:#eecfa2;"></div>
<div class="a" style="left:83px;top:631px;width:1px;height:25px;background:#eecfa2;"></div>
<div class="a" style="left:3px;top:656px;width:80px;height:1px;background:#eab26a;"></div>
<div class="a" style="left:2px;top:657px;width:1px;height:25px;background:#eecfa2;"></div>
<div class="a" style="left:83px;top:657px;width:1px;height:25px;background:#eecfa2;"></div>
<div class="a" style="left:3px;top:682px;width:80px;height:1px;background:#eab26a;"></div>
<div class="a" style="left:2px;top:683px;width:1px;height:25px;background:#eecfa2;"></div>
<div class="a" style="left:83px;top:683px;width:1px;height:25px;background:#eecfa2;"></div>
<div class="a" style="left:3px;top:708px;width:80px;height:1px;background:#eab26a;"></div>
<div class="a" style="left:3px;top:709px;width:1026px;height:25px;background:#fff;line-height:27px;letter-spacing:0.25px">近<span style="color:#c8102a">10</span>场,胜4平3负3, 胜率:<span style="color:#c8102a">40%</span> 让胜率:<span style="color:#c8102a">30%</span> 大率:<span style="color:#c8102a">60%</span> 单率:<span style="color:#c8102a">60%</span></div>
<div class="a" style="left:2px;top:33px;width:1028px;height:1px;background:#e6e6f6;"></div>
</body></html>
